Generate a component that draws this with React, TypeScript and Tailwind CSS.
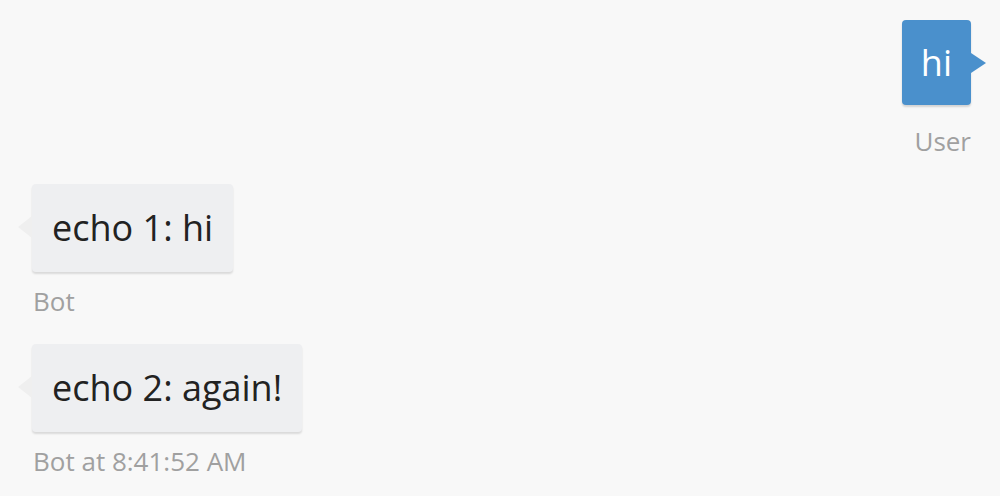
import React from "react";

const font = { fontFamily: '"Open Sans", "Noto Sans", sans-serif' };

function BotMessage({ text, label }: { text: string; label: string }) {
  return (
    <div className="flex flex-col items-start">
      <div className="relative rounded-[4px] bg-[#eeeff1] px-[20px] py-[20px] text-[36px] leading-[48px] text-[#222222] shadow-[0_2px_2px_rgba(0,0,0,0.12)]">
        <span className="absolute left-[-14px] top-[32px] h-0 w-0 border-y-[11px] border-r-[14px] border-y-transparent border-r-[#efefef]" />
        {text}
      </div>
      <div className="mt-[12px] pl-[1px] text-[26px] leading-[34px] text-[#a0a0a0]">{label}</div>
    </div>
  );
}

export default function App() {
  return (
    <div className="h-[496px] w-[1000px] overflow-hidden bg-[#f8f8f8]" style={font}>
      <div className="flex flex-col pl-[32px] pr-[29px] pt-[20px]">
        <div className="flex flex-col items-end">
          <div className="relative rounded-[4px] bg-[#4a90cc] px-[19px] py-[19px] text-[36px] leading-[47px] text-white shadow-[0_2px_2px_rgba(0,0,0,0.15)]">
            <span className="absolute right-[-15px] top-[33px] h-0 w-0 border-y-[10px] border-l-[15px] border-y-transparent border-l-[#4a90cc]" />
            hi
          </div>
          <div className="mt-[19px] text-[26px] leading-[34px] text-[#a0a0a0]">User</div>
        </div>
        <div className="mt-[26px] flex flex-col gap-[26px]">
          <BotMessage text="echo 1: hi" label="Bot" />
          <BotMessage text="echo 2: again!" label="Bot at 8:41:52 AM" />
        </div>
      </div>
    </div>
  );
}
